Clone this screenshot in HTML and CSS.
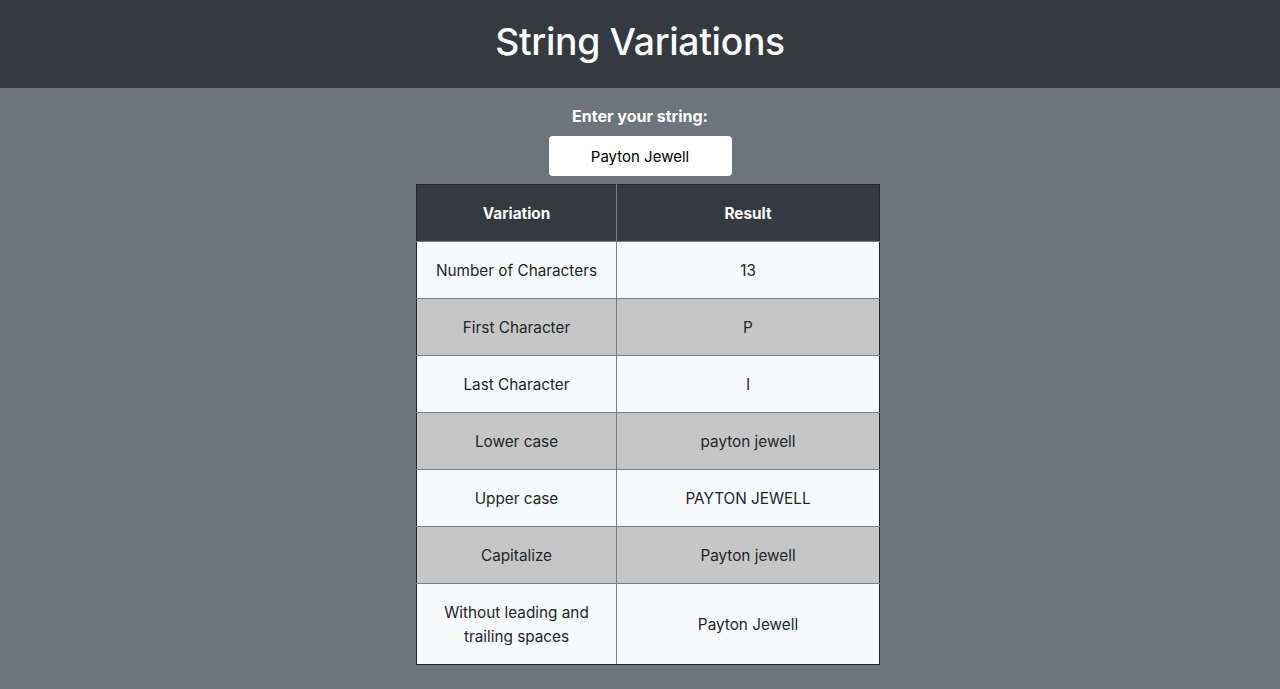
FILE: index.html
```html
<!DOCTYPE html>
<html lang="en">
<head>
<meta charset="utf-8">
<title>String Variations</title>
<link rel="stylesheet" href="styles.css">
</head>
<body>
<header class="topbar">
  <h1 class="title">String Variations</h1>
</header>
<main class="content">
  <label class="label" for="str">Enter your string:</label>
  <input class="field" id="str" type="text" value="Payton Jewell">
  <table class="results">
    <thead>
      <tr><th class="col-var">Variation</th><th>Result</th></tr>
    </thead>
    <tbody>
      <tr><td>Number of Characters</td><td>13</td></tr>
      <tr><td>First Character</td><td>P</td></tr>
      <tr><td>Last Character</td><td>l</td></tr>
      <tr><td>Lower case</td><td>payton jewell</td></tr>
      <tr><td>Upper case</td><td>PAYTON JEWELL</td></tr>
      <tr><td>Capitalize</td><td>Payton jewell</td></tr>
      <tr><td>Without leading and<br>trailing spaces</td><td>Payton Jewell</td></tr>
    </tbody>
  </table>
</main>
</body>
</html>
```
FILE: styles.css
```css
html, body {
  margin: 0;
  padding: 0;
}
body {
  background: #6c757d;
  font-family: Inter, "Noto Sans", "Liberation Sans", sans-serif;
  font-size: 16px;
  line-height: 24px;
  color: #212529;
  min-height: 689px;
}
.topbar {
  background: #343a40;
  height: 88px;
  display: flex;
  align-items: center;
  justify-content: center;
}
.title {
  margin: 0 0 4px;
  color: #fff;
  font-size: 37.3px;
  font-weight: 500;
  line-height: 48px;
  letter-spacing: -0.3px;
}
.content {
  display: flex;
  flex-direction: column;
  align-items: center;
  padding-top: 16px;
}
.label {
  color: #fff;
  font-weight: 700;
  font-size: 16px;
  line-height: 24px;
}
.field {
  margin-top: 8px;
  width: 183px;
  height: 40px;
  box-sizing: border-box;
  border: none;
  border-radius: 4px;
  background: #fff;
  font-family: inherit;
  font-size: 15px;
  color: #000;
  text-align: center;
  padding: 0;
}
.results {
  margin-top: 8px;
  margin-left: 16px;
  width: 464px;
  border-collapse: collapse;
  border: 1px solid #212529;
  text-align: center;
  font-size: 15.3px;
}
.results th, .results td {
  border: 1px solid #7d7d7d;
  padding: 17px 8px 15px;
  line-height: 24px;
}
.results th {
  background: #343a40;
  color: #fff;
  font-weight: 700;
  border-top-color: #212529;
}
.results .col-var {
  width: 183px;
}
.results tbody tr:nth-child(odd) td {
  background: #f8f9fa;
}
.results tbody tr:nth-child(even) td {
  background: #c6c6c6;
}
.results tbody tr:last-child td {
  border-bottom-color: #212529;
}
.results tr > :first-child {
  border-left-color: #212529;
}
.results tr > :last-child {
  border-right-color: #212529;
}
```
